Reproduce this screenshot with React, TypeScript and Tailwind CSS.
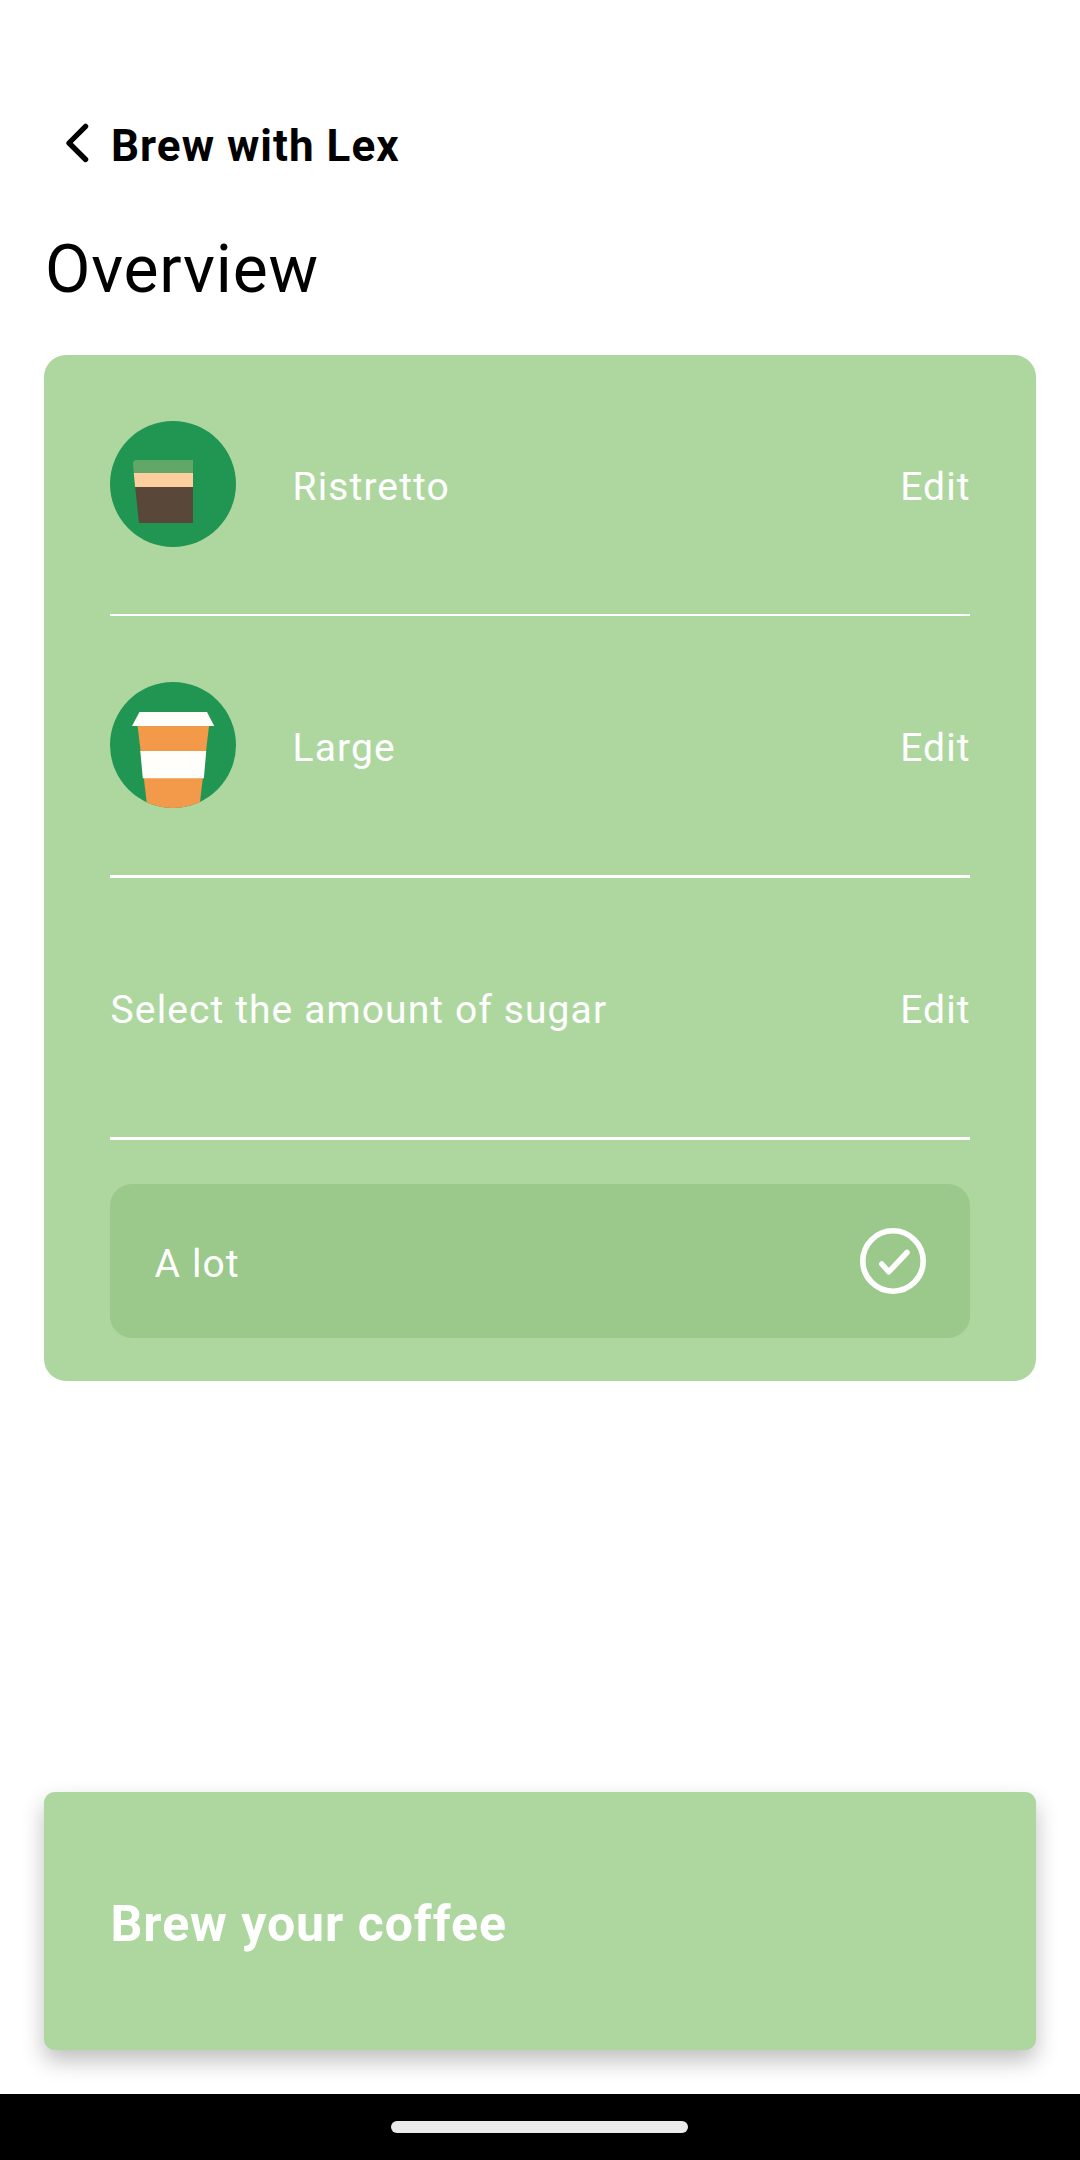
import type { ReactNode } from "react";

function BackIcon() {
  return (
    <svg className="h-11 w-11" viewBox="0 0 44 44" fill="none" stroke="#000" strokeWidth="5.3" strokeLinecap="round" strokeLinejoin="round">
      <path d="M30.6 7.3 14 24l16.6 16.5" />
    </svg>
  );
}

function EspressoIcon() {
  return (
    <svg className="mr-14 h-[126px] w-[126px]" viewBox="0 0 126 126">
      <circle cx="63" cy="63" r="63" fill="#219653" />
      <path d="M26 39H83V52H23.8L23 43Q23 39 26 39Z" fill="#61A768" />
      <path d="M23.8 52H83V66H25.1Z" fill="#FFCE9F" />
      <path d="M25.1 66H83V102H29Z" fill="#594839" />
    </svg>
  );
}

function CupIcon() {
  return (
    <svg className="mr-14 h-[126px] w-[126px]" viewBox="0 0 126 126">
      <defs>
        <clipPath id="cup-clip">
          <circle cx="63" cy="63" r="63" />
        </clipPath>
      </defs>
      <circle cx="63" cy="63" r="63" fill="#219653" />
      <g clipPath="url(#cup-clip)">
        <path d="M27.6 44H99L89.3 126H37.4Z" fill="#F2994A" />
        <path d="M29.5 30H97L104.2 44H22Z" fill="#FFFEFA" />
        <path d="M30.3 69H96.2L93.9 96.3H32.8Z" fill="#FFFEFA" />
      </g>
    </svg>
  );
}

function CheckIcon() {
  return (
    <svg className="h-[66px] w-[66px]" viewBox="0 0 66 66" fill="none" stroke="#fff" strokeLinecap="round" strokeLinejoin="round">
      <circle cx="33" cy="33" r="30.2" strokeWidth="5.6" />
      <path d="M21.8 36 28.8 43.8 47 24.5" strokeWidth="5.5" />
    </svg>
  );
}

function Row({ icon, label }: { icon?: ReactNode; label: string }) {
  return (
    <div className="flex h-[259px] items-center pb-px">
      {icon}
      <span className="flex-1 pt-[5px] pl-[0.6px]">{label}</span>
      <span className="-mr-[0.6px] pt-[5px]">Edit</span>
    </div>
  );
}

export default function App() {
  return (
    <div className="flex h-[2160px] w-[1080px] flex-col bg-white font-['Roboto',sans-serif] text-[39px] leading-[46px] tracking-[1.1px] text-white">
      <header className="flex pt-[120px] pl-[55px] text-black">
        <div className="-mt-px mr-3 h-[52px]">
          <BackIcon />
        </div>
        <span className="text-[44px] leading-[52px] font-bold tracking-[1.04px]">Brew with Lex</span>
      </header>
      <h1 className="mt-[60px] pl-[45px] text-[66px] leading-[76px] tracking-[0.8px] text-black">Overview</h1>

      <main className="mx-11 mt-[47px] h-[1026px] rounded-[22px] bg-[#AED7A0] px-[66px]">
        <Row icon={<EspressoIcon />} label="Ristretto" />
        <div className="h-0.5 bg-white" />
        <Row icon={<CupIcon />} label="Large" />
        <div className="h-[3px] bg-white" />
        <Row label="Select the amount of sugar" />
        <div className="h-[3px] bg-white" />
        <div className="mt-11 flex h-[154px] items-center justify-between rounded-[22px] bg-[#9BC88B] px-11">
          <span className="pt-[5px] pl-[0.6px]">A lot</span>
          <CheckIcon />
        </div>
      </main>

      <button className="mx-11 mt-auto mb-11 flex h-[258px] items-center rounded-[11px] bg-[#AED7A0] px-[66.5px] pt-1.5 text-left text-[50px] leading-[58px] font-bold tracking-[0.95px] shadow-[0_11px_22px_rgba(0,0,0,0.25)]">
        Brew your coffee
      </button>

      <footer className="z-10 flex h-[66px] items-center justify-center bg-black pr-px">
        <div className="h-3 w-[297px] rounded-full bg-[#EBEBEB]" />
      </footer>
    </div>
  );
}
